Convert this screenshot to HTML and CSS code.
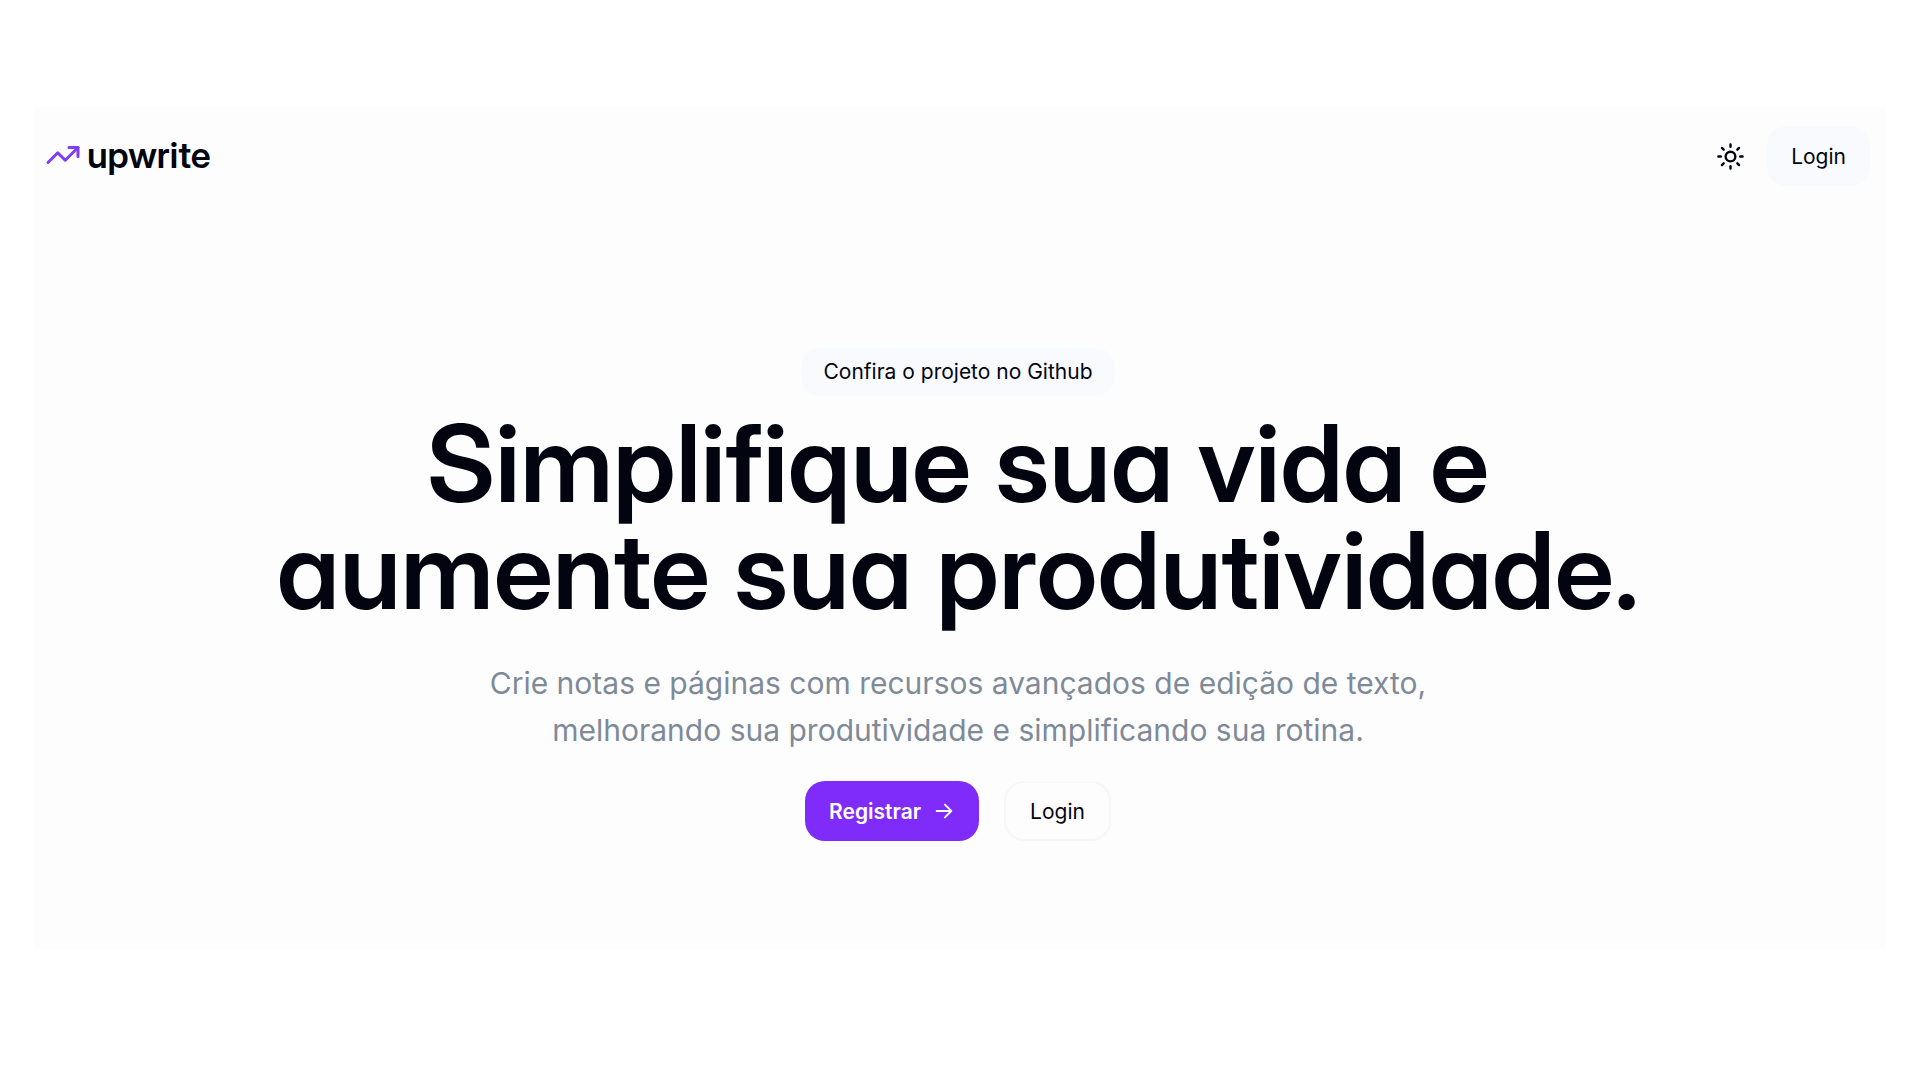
FILE: index.html
```html
<!DOCTYPE html>
<html lang="pt-BR">
<head>
<meta charset="utf-8">
<meta name="viewport" content="width=device-width, initial-scale=1">
<title>upwrite</title>
<link rel="stylesheet" href="styles.css">
</head>
<body>
<div class="page">
  <header class="header">
    <a class="brand" href="#">
      <svg class="brand-icon" viewBox="0 0 24 24" aria-hidden="true"><path d="M22 7l-8.500 8.500-5-5L2 17"/><path d="M16 7h6v6"/></svg>
      <span>upwrite</span>
    </a>
    <nav class="nav">
      <button class="theme" type="button" aria-label="Alternar tema">
        <svg class="theme-icon" viewBox="0 0 24 24" aria-hidden="true"><circle cx="12" cy="12" r="4"/><path d="M12 2v2M12 20v2M4.930 4.930l1.410 1.410M17.660 17.660l1.410 1.410M2 12h2M20 12h2M6.340 17.660l-1.410 1.410M19.070 4.930l-1.410 1.410"/></svg>
      </button>
      <a class="button soft" href="#">Login</a>
    </nav>
  </header>
  <main class="hero">
    <a class="pill" href="#">Confira o projeto no Github</a>
    <h1 class="title">Simplifique sua vida e<br>aumente sua produtividade.</h1>
    <p class="lead">Crie notas e páginas com recursos avançados de edição de texto,<br>melhorando sua produtividade e simplificando sua rotina.</p>
    <div class="actions">
      <a class="button primary" href="#">Registrar
        <svg class="arrow" viewBox="0 0 24 24" aria-hidden="true"><path d="M4 12h16M13 5l7 7-7 7"/></svg>
      </a>
      <a class="button outline" href="#">Login</a>
    </div>
  </main>
</div>
</body>
</html>
```
FILE: styles.css
```css
* { box-sizing: border-box; }
body {
  margin: 0;
  padding: 107px 34px 130px;
  background: #fff;
  color: #020510;
  font-family: Inter, "Liberation Sans", sans-serif;
}
a { color: inherit; text-decoration: none; }
svg { fill: none; stroke: currentColor; stroke-linecap: round; stroke-linejoin: round; }
.page { background: #fdfdfd; padding-bottom: 108px; }
.header {
  display: flex;
  align-items: center;
  justify-content: space-between;
  padding: 19px 16px 0 11px;
}
.brand {
  display: flex;
  align-items: center;
  gap: 6px;
  padding-bottom: 2px;
  font-family: "Inter Display", Inter, "Liberation Sans", sans-serif;
  font-size: 36px;
  line-height: 48px;
  font-weight: 600;
  font-feature-settings: "cv11";
}
.brand-icon { width: 36px; height: 36px; stroke: #7f3df5; stroke-width: 2; }
.nav { display: flex; align-items: center; gap: 22px; }
.theme { display: flex; padding: 0; border: 0; background: none; color: #020510; }
.theme-icon { width: 29px; height: 29px; stroke-width: 2; }
.button {
  display: flex;
  align-items: center;
  justify-content: center;
  height: 60px;
  padding: 0 24px;
  border-radius: 20px;
  font-size: 21px;
}
.soft { background: #f8fafd; }
.hero {
  display: flex;
  flex-direction: column;
  align-items: center;
  padding: 162px 4px 0 0;
  text-align: center;
}
.pill {
  padding: 0 22px;
  border-radius: 20px;
  background: #f8fafd;
  font-size: 21px;
  line-height: 48px;
}
.title {
  margin: 14px 0 0;
  font-family: "Inter Display", Inter, "Liberation Sans", sans-serif;
  font-size: 107px;
  line-height: 107px;
  font-weight: 600;
  font-feature-settings: "cv11";
}
.lead {
  margin: 36px 0 0;
  color: #7f8a99;
  font-size: 30px;
  line-height: 47px;
  font-weight: 400;
}
.actions { display: flex; gap: 25px; margin-top: 27px; }
.primary { gap: 12px; background: #7f2cfb; color: #fff; font-weight: 600; }
.arrow { width: 22px; height: 22px; stroke-width: 2; }
.outline { border: 2px solid #f7f7f9; }
```
